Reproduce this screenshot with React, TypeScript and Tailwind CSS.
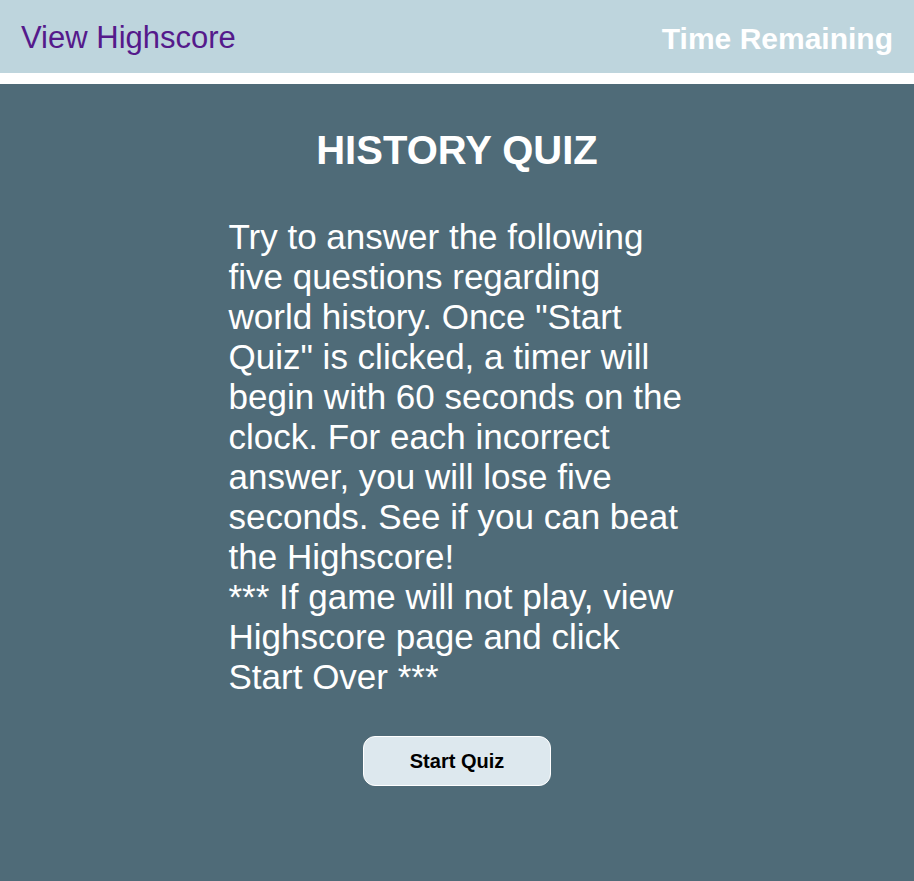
export default function App() {
  return (
    <div className="min-h-screen bg-[#4f6b78] font-['Liberation_Sans',Arial,sans-serif]">
      <header className="flex h-[73px] items-center justify-between bg-[#bed5dd] px-[21px] pt-1">
        <a href="#" className="text-[31px] text-[#551a8b]">
          View Highscore
        </a>
        <span className="text-[30px] font-bold text-white">Time Remaining</span>
      </header>
      <div className="h-[11px] bg-white" />
      <main className="flex flex-col items-center pb-24">
        <h1 className="mt-[46px] text-[40px] leading-[40px] font-bold text-white">HISTORY QUIZ</h1>
        <p className="mt-[47px] w-1/2 text-[35px] leading-[40px] text-white">
          Try to answer the following five questions regarding world history. Once "Start Quiz" is
          clicked, a timer will begin with 60 seconds on the clock. For each incorrect answer, you
          will lose five seconds. See if you can beat the Highscore!
          <br />
          *** If game will not play, view Highscore page and click Start Over ***
        </p>
        <button className="mt-[39px] h-[50px] w-[188px] rounded-xl border border-white bg-[#dde8ee] text-[20px] font-bold text-black">
          Start Quiz
        </button>
      </main>
    </div>
  );
}
